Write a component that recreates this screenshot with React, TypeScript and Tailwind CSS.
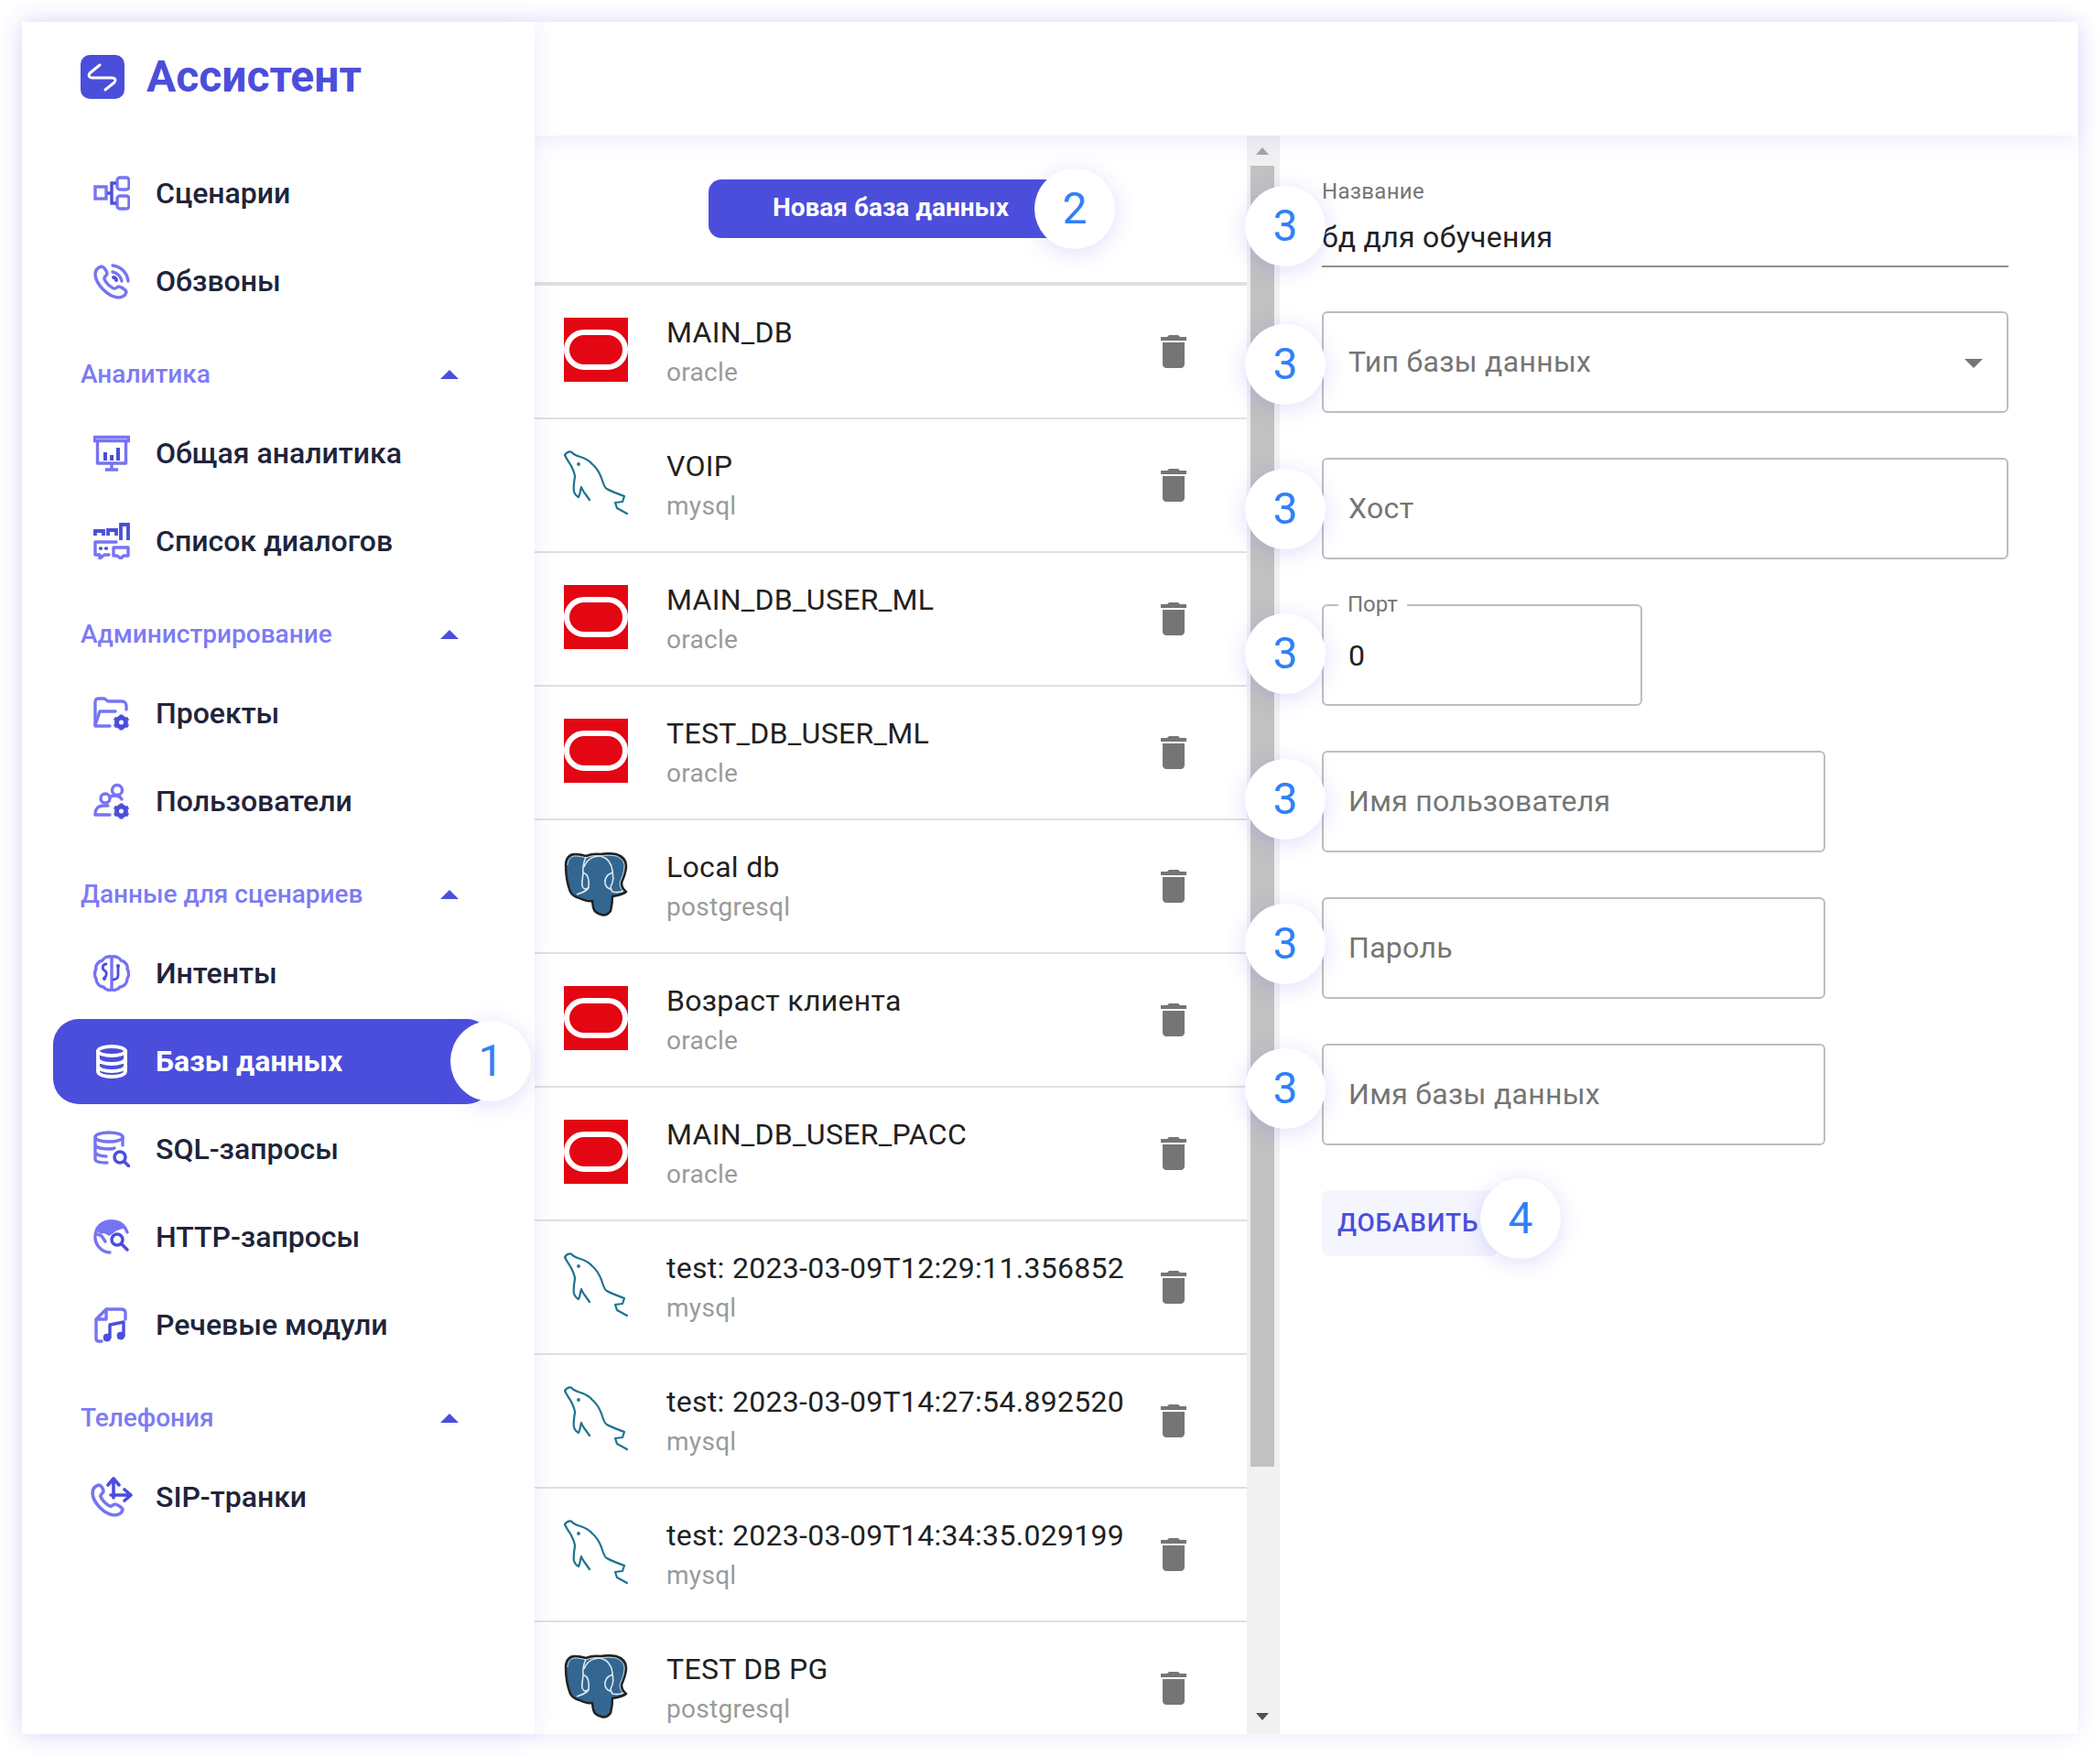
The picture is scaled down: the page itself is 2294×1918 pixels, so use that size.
import type { ReactNode } from "react";

const LIGHT = "#7674f2";
const DARK = "#4b4edb";

const Svg = ({ children }: { children: ReactNode }) => (
  <svg viewBox="0 0 40 40" className="w-10 h-10 shrink-0" fill="none" strokeWidth="3.4" strokeLinecap="round" strokeLinejoin="round">
    {children}
  </svg>
);

const phone = "M9 4C5 5 2 8 2 13c1 11 14 24 25 25 4 0 8-2 9-6 0-2-6-6-8-6-3 0-3 3-6 2-4-2-8-6-10-10-1-3 3-4 3-6 0-3-4-8-6-8z";

const Gear = ({ x, y }: { x: number; y: number }) => (
  <g stroke={DARK}>
    <circle cx={x} cy={y} r="5" strokeWidth="5" />
    <path d={`M${x} ${y - 8.500}v1.500M${x} ${y + 7}v1.500M${x - 7.500} ${y - 4.500}l1.500 1M${x + 6} ${y + 3.500}l1.500 1M${x - 7.500} ${y + 4.500}l1.500-1M${x + 6} ${y - 3.500}l1.500-1`} strokeWidth="4" strokeLinecap="butt" />
  </g>
);

const Lens = ({ x, y }: { x: number; y: number }) => (
  <g stroke={DARK} strokeWidth="3.5">
    <circle cx={x} cy={y} r="6" fill="#fff" />
    <path d={`M${x + 5} ${y + 5}l6 6`} />
  </g>
);

const icons: Record<string, ReactNode> = {
  scenarios: (
    <Svg>
      <rect x="2" y="13" width="12" height="13" stroke={LIGHT} strokeLinejoin="miter" />
      <rect x="26" y="3" width="13" height="13" rx="3" stroke={LIGHT} />
      <rect x="26" y="23" width="13" height="14" rx="3" stroke={LIGHT} />
      <path d="M15 20h5M25 9h-5v22h5" stroke={DARK} strokeLinecap="butt" strokeLinejoin="miter" />
    </Svg>
  ),
  calls: (
    <Svg>
      <path d={phone} stroke={LIGHT} />
      <path d="M21 3c9 1 16 8 17 17" stroke={LIGHT} />
      <path d="M21 10c5 1 9 5 10 10" stroke={LIGHT} />
      <path d="M22 16c2 0 3 2 3 3" stroke={DARK} strokeWidth="4" />
    </Svg>
  ),
  stats: (
    <Svg>
      <path d="M1.500 2.500h37v4h-37z" stroke={LIGHT} strokeLinecap="butt" strokeLinejoin="miter" />
      <path d="M4.500 7v24h31V7M20 32v5M13 38h14" stroke={LIGHT} strokeLinecap="butt" />
      <path d="M13 28v-9M20 28v-6M27 28V14" stroke={DARK} strokeWidth="4" strokeLinecap="butt" />
    </Svg>
  ),
  dialogs: (
    <Svg>
      <path d="M2 14V9h9v5M16 14V8h9v6M30 19V2h8v17" stroke={DARK} strokeWidth="3.800" strokeLinecap="butt" strokeLinejoin="miter" />
      <path d="M2 21h23M2 21v14h5v4l5-4h5" stroke={LIGHT} />
      <path d="M22 27h16v9h-5l-3 3-4-3h-4z" stroke={LIGHT} />
      <path d="M7.500 28h1M13.500 28h1" stroke={DARK} />
    </Svg>
  ),
  projects: (
    <Svg>
      <path d="M2 33V8c0-3 1-4 4-4h6l4 3h15c3 0 5 2 5 5v4" stroke={LIGHT} />
      <path d="M2 33l5-15h17M2 34h16" stroke={LIGHT} />
      <Gear x={30.500} y={30} />
    </Svg>
  ),
  users: (
    <Svg>
      <circle cx="26" cy="8" r="5.500" stroke={LIGHT} />
      <circle cx="13" cy="17" r="5" stroke={LIGHT} />
      <path d="M2 34c0-5 3-9 9-9h5M2 35h16M19 15c4-2 10-1 12 3" stroke={LIGHT} />
      <Gear x={30.500} y={31} />
    </Svg>
  ),
  intents: (
    <Svg>
      <path d="M20 2c-4-1-9 1-10 4-5 1-8 6-7 9-2 4-2 8 0 11 0 5 4 9 8 9 2 3 6 4 9 3 3 1 7 0 9-3 4 0 8-4 8-9 2-3 2-7 0-11 1-3-2-8-7-9-1-3-6-5-10-4z" stroke={LIGHT} />
      <path d="M20 3v34" stroke={LIGHT} />
      <path d="M14 10c-4 0-5 5-2 7 3 1 3 6 0 8M27 12v10c0 3-2 5-5 5" stroke={DARK} strokeWidth="2.800" />
      <circle cx="12" cy="26" r="2" fill={DARK} />
      <circle cx="27" cy="12" r="2" fill={DARK} />
    </Svg>
  ),
  databases: (
    <Svg>
      <g stroke="#fff" strokeWidth="3.800">
        <ellipse cx="20" cy="9" rx="15" ry="5" />
        <path d="M5 9v22c0 4 7 6 15 6s15-2 15-6V9M5 17c0 4 7 6 15 6s15-2 15-6M5 25c0 4 7 6 15 6s15-2 15-6" />
      </g>
    </Svg>
  ),
  sql: (
    <Svg>
      <g stroke={LIGHT}>
        <ellipse cx="17" cy="7" rx="15" ry="5" />
        <path d="M2 7v24c0 3 6 4 13 4M32 7v9M2 15c0 3 6 5 15 5 2 0 4 0 6-1M2 23c0 3 6 5 12 5" />
      </g>
      <Lens x={29} y={29} />
    </Svg>
  ),
  http: (
    <Svg>
      <path d="M20 3A17 17 0 0 0 18 37M20 3c8 0 14 4 17 12" stroke={LIGHT} />
      <path d="M4 11c3-5 9-8 16-8 6 0 10 2 13 6l-9 3-7 5-5-3-4 1z" fill={LIGHT} stroke={LIGHT} />
      <path d="M4 17l5 2 4 6" stroke={LIGHT} />
      <Lens x={26} y={23} />
    </Svg>
  ),
  speech: (
    <Svg>
      <path d="M14 3h16c3 0 5 1 5 4v7M14 3L3 14v21c0 2 1 3 3 3h3M14 3v11H3" stroke={LIGHT} />
      <path d="M18 33V20l15-3v14" stroke={DARK} />
      <circle cx="15" cy="34" r="4" fill={DARK} stroke={DARK} strokeWidth="1" />
      <circle cx="30" cy="32" r="4" fill={DARK} stroke={DARK} strokeWidth="1" />
    </Svg>
  ),
  sip: (
    <svg viewBox="0 0 46 46" className="w-[46px] h-[46px] -mx-[3px] shrink-0" fill="none" strokeWidth="3.6" strokeLinecap="round" strokeLinejoin="round">
      <path d="M9 10C5 11 2 14 2 19c1 11 13 23 24 24 4 0 8-2 9-6 0-2-6-6-8-6-3 0-3 3-6 2-4-2-8-6-10-10-1-3 3-4 3-6 0-3-3-7-5-7z" stroke={LIGHT} />
      <path d="M25 24V4M19 10l6-7 6 7M22 21h21M37 15l7 6-7 6" stroke={DARK} />
    </svg>
  ),
};

const Caret = () => (
  <svg viewBox="0 0 20 10" className="w-5 h-[10px]" fill={DARK}>
    <path d="M0 10 10 0l10 10z" />
  </svg>
);

const Badge = ({ n, className }: { n: number; className: string }) => (
  <div className={`absolute w-[88px] h-[88px] rounded-full bg-white flex items-center justify-center text-[48px] leading-none text-[#2f80f7] shadow-[0_4px_24px_rgba(90,90,240,0.2)] z-10 ${className}`}>
    {n}
  </div>
);

const NavItem = ({ icon, label, active }: { icon: string; label: string; active?: boolean }) =>
  active ? (
    <div className="h-24 flex items-center">
      <div className="relative ml-[34px] w-[480px] h-[93px] rounded-[28px] bg-[#4b4edb] flex items-center gap-7 pl-11">
        {icons[icon]}
        <span className="text-[32px] font-bold text-white">{label}</span>
        <Badge n={1} className="-right-[42px] top-[2px]" />
      </div>
    </div>
  ) : (
    <div className="h-24 flex items-center gap-7 pl-[78px]">
      {icons[icon]}
      <span className="text-[32px] font-medium text-[#20243a]">{label}</span>
    </div>
  );

const SectionTitle = ({ label }: { label: string }) => (
  <div className="mt-[15px] mb-[-1px] h-[78px] w-[413px] ml-16 flex items-center justify-between">
    <span className="text-[28px] font-medium text-[#7d7bf3]">{label}</span>
    <Caret />
  </div>
);

const Sidebar = () => (
  <aside className="w-[560px] shrink-0 bg-white shadow-[0_0_24px_rgba(90,90,240,0.12)] z-10">
    <div className="h-[139px] pl-16 pt-9 flex items-start gap-6">
      <svg viewBox="0 0 48 48" className="w-12 h-12 shrink-0">
        <rect width="48" height="48" rx="10" fill={DARK} />
        <path d="M21 11 10 20c-2 3 0 5 3 5h21c4 0 5 2 3 5L27 38" fill="none" stroke="#fff" strokeWidth="3" strokeLinecap="round" strokeLinejoin="round" />
      </svg>
      <span className="text-[48px] leading-[48px] font-bold text-[#4b4edb]">Ассистент</span>
    </div>
    <NavItem icon="scenarios" label="Сценарии" />
    <NavItem icon="calls" label="Обзвоны" />
    <SectionTitle label="Аналитика" />
    <NavItem icon="stats" label="Общая аналитика" />
    <NavItem icon="dialogs" label="Список диалогов" />
    <SectionTitle label="Администрирование" />
    <NavItem icon="projects" label="Проекты" />
    <NavItem icon="users" label="Пользователи" />
    <SectionTitle label="Данные для сценариев" />
    <NavItem icon="intents" label="Интенты" />
    <NavItem icon="databases" label="Базы данных" active />
    <NavItem icon="sql" label="SQL-запросы" />
    <NavItem icon="http" label="HTTP-запросы" />
    <NavItem icon="speech" label="Речевые модули" />
    <SectionTitle label="Телефония" />
    <NavItem icon="sip" label="SIP-транки" />
  </aside>
);

const OracleLogo = () => (
  <svg viewBox="0 0 70 70" className="w-[70px] h-[70px] shrink-0 -mt-[2px]">
    <rect width="70" height="70" fill="#e30613" />
    <rect x="3" y="16" width="64" height="38" rx="19" fill="none" stroke="#fff" strokeWidth="6" />
  </svg>
);

const MysqlLogo = () => (
  <svg viewBox="0 0 70 80" className="w-[70px] h-20 shrink-0" fill="none" stroke="#1d7391" strokeWidth="2.2" strokeLinejoin="round" strokeLinecap="round">
    <path d="M1 8C3 5 5 4 8 4.500 11 8 14 9 18 10 24 12 28 14 31 18 36 22 39 28 41 33 43 39 44 44 47 45 52 48 58 50 66 53L64 59 56 60 58 66 69 72" />
    <path d="M1 8C3 13 6 16 8 20 10 24 12 28 12 32 11 38 10 43 11 48 12 51 14 53 16 54 18 50 18 46 19 43 20 46 21 47 23 50L28 57" />
    <circle cx="16" cy="18" r="0.8" />
  </svg>
);

const PostgresLogo = () => (
  <svg viewBox="0 0 70 70" className="w-[70px] h-[70px] shrink-0 -mt-[2px]" strokeLinejoin="round">
    <path d="M2 14C2 6 6 2 12 2 17 2 21 3 24 4 29 2 34 1 40 2 46 1 52 1 57 2 64 4 68 9 68 15 68 22 65 28 63 33 63 37 64 40 68 43 65 46 59 47 53 48 53 54 52 60 51 64 48 68 44 69 41 68 36 67 33 65 32 60L31 53C26 54 21 52 17 50 13 49 9 47 7 43 3 33 2 24 2 14z" fill="#336791" stroke="#222" strokeWidth="2.500" />
    <path d="M4 14C4 8 8 4 12 4 17 4 21 5 24 6 29 4 34 3 40 4 46 3 52 3 57 4 62 6 66 10 66 15 66 22 63 28 61 33 61 37 62 40 65 43" fill="none" stroke="#cfd8e0" strokeWidth="1" />
    <g fill="none" stroke="#dfe8f0" strokeWidth="1.600">
      <path d="M24 5C22 10 20 16 21 22 21 27 19 32 20 37 22 41 25 41 27 38M40 4C32 4 25 8 22 16" />
      <path d="M40 4C47 6 52 12 53 20 53 25 55 28 53 33 51 37 50 39 53 43 57 44 61 44 65 42" />
      <path d="M21 22C26 24 28 30 27 38 26 42 20 44 14 46M53 22C48 24 44 28 45 34 46 38 49 40 52 40" />
    </g>
  </svg>
);

const logos = { oracle: OracleLogo, mysql: MysqlLogo, postgresql: PostgresLogo };

type DbType = keyof typeof logos;

const databases: { name: string; type: DbType }[] = [
  { name: "MAIN_DB", type: "oracle" },
  { name: "VOIP", type: "mysql" },
  { name: "MAIN_DB_USER_ML", type: "oracle" },
  { name: "TEST_DB_USER_ML", type: "oracle" },
  { name: "Local db", type: "postgresql" },
  { name: "Возраст клиента", type: "oracle" },
  { name: "MAIN_DB_USER_PACC", type: "oracle" },
  { name: "test: 2023-03-09T12:29:11.356852", type: "mysql" },
  { name: "test: 2023-03-09T14:27:54.892520", type: "mysql" },
  { name: "test: 2023-03-09T14:34:35.029199", type: "mysql" },
  { name: "TEST DB PG", type: "postgresql" },
];

const DbRow = ({ name, type }: { name: string; type: DbType }) => {
  const Logo = logos[type];
  return (
    <div className="h-[146px] shrink-0 border-b-2 border-[#e0e0e0] flex items-center">
      <div className="w-[144px] shrink-0 pl-8 -mt-[3px] flex items-center">
        <Logo />
      </div>
      <div className="flex-1 min-w-0 flex flex-col gap-[2px]">
        <span className="text-[32px] leading-[44px] text-[#212121] tracking-[0.3px] whitespace-nowrap">{name}</span>
        <span className="text-[28px] leading-[40px] text-[#9a9a9a] tracking-[0.3px]">{type}</span>
      </div>
      <svg viewBox="0 0 24 24" className="w-12 h-12 mr-14 shrink-0" fill="#757575">
        <path d="M6 19c0 1.100.9 2 2 2h8c1.100 0 2-.9 2-2V7H6v12zM19 4h-3.500l-1-1h-5l-1 1H5v2h14V4z" />
      </svg>
    </div>
  );
};

const DbList = () => (
  <section className="w-[778px] shrink-0 flex flex-col overflow-hidden">
    <div className="h-[164px] shrink-0 border-b-4 border-[#e0e0e0] flex items-start justify-center pt-[48px]">
      <div className="relative w-[398px] h-16 rounded-[14px] bg-[#4b4edb] flex items-center justify-center">
        <span className="text-[28px] font-bold text-white -mt-[2px]">Новая база данных</span>
      </div>
    </div>
    {databases.map((db) => (
      <DbRow key={db.name} name={db.name} type={db.type} />
    ))}
  </section>
);

const Scrollbar = () => (
  <div className="w-9 shrink-0 bg-[#f1f1f1] flex flex-col items-start pl-1">
    <div className="h-[33px] w-[26px] flex items-center justify-center">
      <svg viewBox="0 0 14 8" className="w-[14px] h-2" fill="#a3a3a3">
        <path d="M0 8 7 0l7 8z" />
      </svg>
    </div>
    <div className="h-[1421px] w-[26px] bg-[#c1c1c1]" />
    <div className="flex-1 w-[26px] flex items-end justify-center pb-[15px]">
      <svg viewBox="0 0 14 8" className="w-[14px] h-2" fill="#505050">
        <path d="M0 0h14L7 8z" />
      </svg>
    </div>
  </div>
);

const Field = ({ label, width, badge, select }: { label: string; width: string; badge: string; select?: boolean }) => (
  <div className={`relative h-[111px] mb-[49px] border-2 border-[#bdbdbd] rounded-[6px] flex items-center justify-between pl-[27px] pr-3 ${width}`}>
    <span className="text-[32px] text-[#757575] tracking-[0.3px] pb-[1px]">{label}</span>
    {select && (
      <svg viewBox="0 0 24 24" className="w-12 h-12" fill="#757575">
        <path d="M7 10l5 5 5-5z" />
      </svg>
    )}
    <Badge n={3} className={`-left-[86px] ${badge}`} />
  </div>
);

const DbForm = () => (
  <section className="flex-1 pl-[46px] flex flex-col items-start">
    <div className="relative w-[750px] h-[142px] mb-[50px] pt-[46px]">
      <div className="text-[24px] leading-[30px] text-[#757575] tracking-[0.3px]">Название</div>
      <div className="h-[68px] pt-1 flex items-center border-b-2 border-[#8f8f8f] text-[32px] text-[#212121] tracking-[0.3px]">бд для обучения</div>
      <Badge n={3} className="-left-[84px] top-[55px]" />
    </div>
    <Field label="Тип базы данных" width="w-[750px]" badge="top-[12px]" select />
    <Field label="Хост" width="w-[750px]" badge="top-[10px]" />
    <div className="relative w-[350px] h-[111px] mb-[49px] border-2 border-[#bdbdbd] rounded-[6px] flex items-center pl-[27px]">
      <span className="absolute left-[16px] -top-[17px] bg-white px-[10px] text-[24px] leading-[30px] text-[#757575]">Порт</span>
      <span className="text-[32px] text-[#212121]">0</span>
      <Badge n={3} className="-left-[86px] top-[8px]" />
    </div>
    <Field label="Имя пользователя" width="w-[550px]" badge="top-[7px]" />
    <Field label="Пароль" width="w-[550px]" badge="top-[5px]" />
    <Field label="Имя базы данных" width="w-[550px]" badge="top-[3px]" />
    <div className="relative w-[192px] h-[72px] rounded-[8px] bg-[#f5f5fd] flex items-center pl-[17px]">
      <span className="text-[28px] font-medium text-[#4b4edb] tracking-[0.8px]">ДОБАВИТЬ</span>
      <Badge n={4} className="left-[173px] -top-[13px]" />
    </div>
  </section>
);

export default function App() {
  return (
    <div className="w-[2294px] h-[1918px] p-6 bg-white font-['Roboto',sans-serif]">
      <div className="h-full flex bg-white shadow-[0_0_24px_rgba(90,90,240,0.14)]">
        <Sidebar />
        <main className="flex-1 min-w-0 flex flex-col">
          <header className="h-[124px] shrink-0 bg-white shadow-[0_4px_24px_rgba(90,90,240,0.12)] z-[5]" />
          <div className="relative flex-1 min-h-0 flex">
            <DbList />
            <Scrollbar />
            <DbForm />
            <Badge n={2} className="left-[546px] top-[36px]" />
          </div>
        </main>
      </div>
    </div>
  );
}
